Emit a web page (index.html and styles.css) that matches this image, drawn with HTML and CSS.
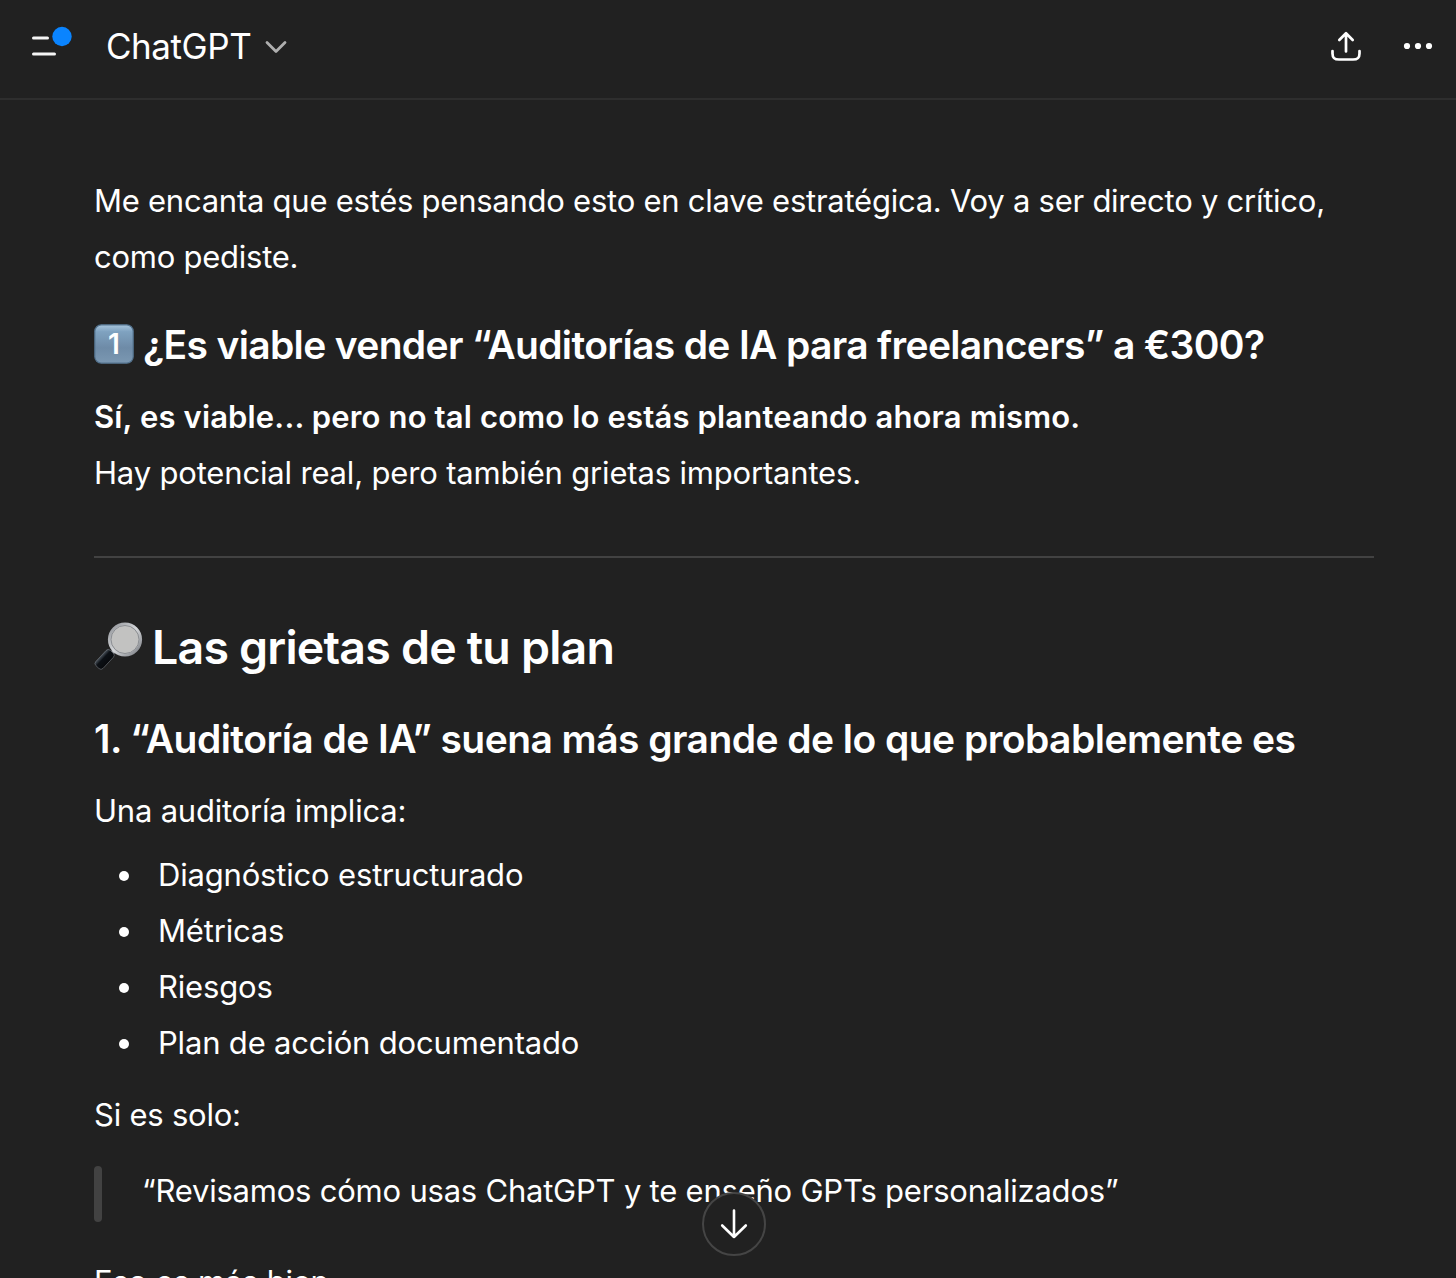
FILE: index.html
```html
<!DOCTYPE html>
<html lang="es">
<head>
    <meta charset="utf-8">
    <title>ChatGPT</title>

    <link rel="stylesheet" href="styles.css">
</head>
<body>
    <header class="topbar">
        <button class="menu" aria-label="Menu">
            <svg width="48" height="48" viewBox="0 0 48 48">
                <path d="M5.5 18H19.5M5.5 34H26.5" stroke="#f5f5f5" stroke-width="3" stroke-linecap="round"/>
                <circle cx="34" cy="16.5" r="9.7" fill="#0a84ff"/>
            </svg>
        </button>
        <div class="model">
            <span class="modelName">ChatGPT</span>
            <svg width="24" height="16" viewBox="0 0 24 16">
                <path d="M3 3.5L12 12.5L21 3.5" fill="none" stroke="#afafaf" stroke-width="2.8" stroke-linecap="round" stroke-linejoin="round"/>
            </svg>
        </div>
        <div class="actions">
            <svg width="32" height="32" viewBox="0 0 32 32" fill="none" stroke="#fff" stroke-width="2.7" stroke-linecap="round" stroke-linejoin="round">
                <path d="M16 21.5V3.3M9.3 10L16 3.3L22.7 10"/>
                <path d="M2.5 21V23.5C2.5 28 4.5 29.5 9 29.5H23C27.5 29.5 29.5 28 29.5 23.5V21"/>
            </svg>
            <svg width="32" height="32" viewBox="0 0 32 32" fill="#fff">
                <circle cx="5" cy="16" r="3.1"/>
                <circle cx="16" cy="16" r="3.1"/>
                <circle cx="27" cy="16" r="3.1"/>
            </svg>
        </div>
    </header>

    <main class="message">
        <p class="intro">Me encanta que estés pensando esto en clave estratégica. Voy a ser directo y crítico, como pediste.</p>

        <h3 class="question">
            <svg class="keycap" width="40" height="40" viewBox="0 0 40 40">
                <defs>
                    <linearGradient id="keycapFill" x1="0" y1="0" x2="0" y2="1">
                        <stop offset="0" stop-color="#a9c6dd"/>
                        <stop offset=".18" stop-color="#7fa2c0"/>
                        <stop offset=".6" stop-color="#6e8ba7"/>
                        <stop offset="1" stop-color="#7b98b2"/>
                    </linearGradient>
                </defs>
                <rect x=".8" y=".8" width="38.4" height="38.4" rx="6.5" fill="url(#keycapFill)" stroke="#52718c" stroke-width="1.2"/>
                <text x="19.5" y="30" text-anchor="middle">1</text>
            </svg>
            <span>¿Es viable vender “Auditorías de IA para freelancers” a €300?</span>
        </h3>
        <p class="answer"><strong>Sí, es viable... pero no tal como lo estás planteando ahora mismo.</strong><br>
        Hay potencial real, pero también grietas importantes.</p>

        <hr>

        <h2>
            <svg class="magnifier" width="50" height="50" viewBox="0 0 50 50">
                <defs>
                    <linearGradient id="rim" x1="0" y1="0" x2="1" y2="1">
                        <stop offset="0" stop-color="#8d9095"/>
                        <stop offset=".5" stop-color="#d5d7da"/>
                        <stop offset="1" stop-color="#777a80"/>
                    </linearGradient>
                    <linearGradient id="handle" x1="0" y1="0" x2="1" y2="0">
                        <stop offset="0" stop-color="#4a535c"/>
                        <stop offset=".35" stop-color="#0c1015"/>
                        <stop offset="1" stop-color="#080a0d"/>
                    </linearGradient>
                </defs>
                <path d="M21 29L17 33" stroke="#a3a6aa" stroke-width="4"/>
                <rect x="-5" y="-10.5" width="10" height="21" rx="3" transform="translate(10.6 38.4) rotate(43)" fill="url(#handle)" stroke="#71767b" stroke-width=".6"/>
                <circle cx="31" cy="18.5" r="15.7" fill="#c0c0bf" stroke="url(#rim)" stroke-width="2.8"/>
                <circle cx="31" cy="18.5" r="14" fill="#c2c2c1" stroke="#85888d" stroke-width=".9"/>
            </svg>
            <span>Las grietas de tu plan</span>
        </h2>

        <h3 class="point"><span>1. “Auditoría de IA” suena más grande de lo que probablemente es</span></h3>
        <p>Una auditoría implica:</p>
        <ul>
            <li>Diagnóstico estructurado</li>
            <li>Métricas</li>
            <li>Riesgos</li>
            <li>Plan de acción documentado</li>
        </ul>
        <p>Si es solo:</p>
        <blockquote>“Revisamos cómo usas ChatGPT y te enseño GPTs personalizados”</blockquote>
        <p>Eso es más bien</p>
    </main>

    <!-- Floats over the conversation -->
    <button class="scrollDown" aria-label="Scroll down">
        <svg width="32" height="32" viewBox="0 0 32 32" fill="none" stroke="#fff" stroke-width="2.6" stroke-linecap="round" stroke-linejoin="round">
            <path d="M16 2.5V29M4.2 17.5L16 29L27.8 17.5"/>
        </svg>
    </button>
</body>
</html>
```
FILE: styles.css
```css
* {
    box-sizing: border-box;
}

body {
    margin: 0;
    height: 1278px;
    overflow: hidden;
    position: relative;
    background-color: #212121;
    color: #fff;
    font: 31px/56px Inter, sans-serif;
    letter-spacing: -0.22px;
}

svg {
    display: block;
    flex: none;
}

button {
    padding: 0;
    border: none;
    background: none;
}

.topbar {
    display: flex;
    align-items: center;
    height: 100px;
    padding: 0 22px 6px 28px;
    border-bottom: 2px solid #2e2e2e;
}

.menu {
    height: 48px;
    margin-top: -4px;
}

.model {
    display: flex;
    align-items: center;
    gap: 13px;
    margin-left: 30px;
    font-size: 35px;
}

.modelName {
    letter-spacing: -0.45px;
}

.model svg {
    margin-top: 2px;
}

.actions {
    display: flex;
    gap: 40px;
    margin-left: auto;
}

.message {
    width: 1280px;
    margin: 73px 0 0 94px;
}

p, h2, h3 {
    margin: 0;
}

.intro {
    letter-spacing: -0.25px;
}

.answer {
    letter-spacing: -0.17px;
}

h2, h3 {
    display: flex;
    align-items: center;
    font-weight: 600;
    white-space: nowrap;
}

h3 {
    font-size: 39px;
    letter-spacing: -0.55px;
}

strong {
    font-weight: 600;
    letter-spacing: 0.15px;
}

.question {
    gap: 9px;
    margin: 32px 0 16px;
    letter-spacing: -0.66px;
}

.keycap {
    margin-top: -2px;
}

.keycap text {
    font: 600 28px Inter, sans-serif;
    fill: #fff;
}

hr {
    height: 2px;
    margin: 55px 0 61px;
    border: none;
    background-color: #424242;
}

h2 {
    gap: 8px;
    font-size: 46.5px;
    letter-spacing: -0.8px;
}

.magnifier {
    margin-top: -2px;
}

.point {
    margin: 36px 0 16px;
}

ul {
    margin: 8px 0 16px;
    padding: 0;
    list-style: none;
}

li {
    display: flex;
    align-items: center;
    letter-spacing: -0.18px;
}

li::before {
    content: "";
    width: 10px;
    height: 10px;
    margin: 2px 29px 0 25px;
    border-radius: 50%;
    background-color: #fff;
}

blockquote {
    display: flex;
    align-items: center;
    height: 56px;
    margin: 22px 0 33px;
    padding-bottom: 4px;
}

blockquote::before {
    content: "";
    width: 8px;
    height: 56px;
    margin: 6px 40px 0 0;
    border-radius: 4px;
    background-color: #424242;
}

.scrollDown {
    position: absolute;
    left: 702px;
    top: 1192px;
    display: flex;
    align-items: center;
    justify-content: center;
    width: 64px;
    height: 64px;
    border: 2px solid #454545;
    border-radius: 50%;
    background-color: #212121;
}
```
